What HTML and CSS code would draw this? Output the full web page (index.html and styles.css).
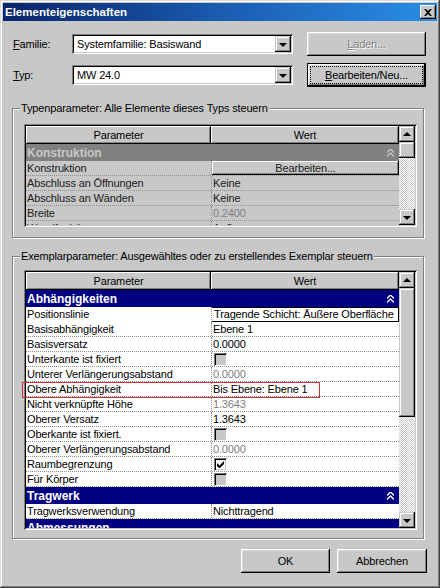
FILE: index.html
```html
<!DOCTYPE html>
<html lang="de">
<head>
<meta charset="utf-8">
<title>Elementeigenschaften</title>
<link rel="stylesheet" href="styles.css">
</head>
<body>
<div class="window">
  <div class="titlebar">
    <span class="title">Elementeigenschaften</span>
    <span class="closebtn"><svg width="8" height="7" viewBox="0 0 8 7"><path d="M0 0h2l2 2 2-2h2L5 3.5 8 7H6L4 5 2 7H0l3-3.5z" fill="#000"/></svg></span>
  </div>
  <div class="content">
    <div class="formrow">
      <span class="lbl"><u>F</u>amilie:</span>
      <div class="combo"><span class="combo-text">Systemfamilie: Basiswand</span><span class="dropbtn"><span class="tri-down"></span></span></div>
      <span class="btn side disabled"><span><u>L</u>aden...</span></span>
    </div>
    <div class="formrow">
      <span class="lbl"><u>T</u>yp:</span>
      <div class="combo"><span class="combo-text">MW 24.0</span><span class="dropbtn"><span class="tri-down"></span></span></div>
      <span class="btn side default"><span class="focus"><u>B</u>earbeiten/Neu...</span></span>
    </div>

    <div class="group g1">
      <div class="glabel">Typenparameter: Alle Elemente dieses Typs steuern</div>
      <div class="grid t1">
        <div class="view">
          <div class="hdr"><span>Parameter</span><span>Wert</span></div>
          <div class="cat gray"><span>Konstruktion</span><span class="chev"><svg width="7" height="8" viewBox="0 0 7 8"><path d="M0 3.5L3.5 0 7 3.5M0 7.5L3.5 4 7 7.5" fill="none" stroke="currentColor" stroke-width="1.3"/></svg></span></div>
          <div class="row ro"><span class="p">Konstruktion</span><span class="v"><span class="cellbtn">Bearbeiten...</span></span></div>
          <div class="row ro"><span class="p">Abschluss an Öffnungen</span><span class="v">Keine</span></div>
          <div class="row ro"><span class="p">Abschluss an Wänden</span><span class="v">Keine</span></div>
          <div class="row ro"><span class="p">Breite</span><span class="v dim">0.2400</span></div>
          <div class="row ro"><span class="p">Wandfunktion</span><span class="v">Außen</span></div>
        </div>
        <div class="sbar">
          <span class="sbtn"><span class="tri-up"></span></span>
          <span class="thumb th1"></span>
          <span class="track"></span>
          <span class="sbtn"><span class="tri-down"></span></span>
        </div>
      </div>
    </div>

    <div class="group g2">
      <div class="glabel">Exemplarparameter: Ausgewähltes oder zu erstellendes Exemplar steuern</div>
      <div class="grid t2">
        <div class="view">
          <div class="hdr"><span>Parameter</span><span>Wert</span></div>
          <div class="cat navy"><span>Abhängigkeiten</span><span class="chev"><svg width="7" height="8" viewBox="0 0 7 8"><path d="M0 3.5L3.5 0 7 3.5M0 7.5L3.5 4 7 7.5" fill="none" stroke="currentColor" stroke-width="1.3"/></svg></span></div>
          <div class="row"><span class="p">Positionslinie</span><span class="v"><span class="edit">Tragende Schicht: Äußere Oberfläche</span></span></div>
          <div class="row"><span class="p">Basisabhängigkeit</span><span class="v">Ebene 1</span></div>
          <div class="row"><span class="p">Basisversatz</span><span class="v">0.0000</span></div>
          <div class="row"><span class="p">Unterkante ist fixiert</span><span class="v"><span class="chk off"></span></span></div>
          <div class="row"><span class="p">Unterer Verlängerungsabstand</span><span class="v dim">0.0000</span></div>
          <div class="row"><span class="p">Obere Abhängigkeit</span><span class="v">Bis Ebene: Ebene 1</span></div>
          <div class="row"><span class="p">Nicht verknüpfte Höhe</span><span class="v dim">1.3643</span></div>
          <div class="row"><span class="p">Oberer Versatz</span><span class="v">1.3643</span></div>
          <div class="row"><span class="p">Oberkante ist fixiert.</span><span class="v"><span class="chk off"></span></span></div>
          <div class="row"><span class="p">Oberer Verlängerungsabstand</span><span class="v dim">0.0000</span></div>
          <div class="row"><span class="p">Raumbegrenzung</span><span class="v"><span class="chk on"><svg width="7" height="7" viewBox="0 0 7 7"><path d="M0 2v3l2 2h1l4-4V0L2.5 4.5z" fill="#000"/></svg></span></span></div>
          <div class="row"><span class="p">Für Körper</span><span class="v"><span class="chk off"></span></span></div>
          <div class="cat navy"><span>Tragwerk</span><span class="chev"><svg width="7" height="8" viewBox="0 0 7 8"><path d="M0 3.5L3.5 0 7 3.5M0 7.5L3.5 4 7 7.5" fill="none" stroke="currentColor" stroke-width="1.3"/></svg></span></div>
          <div class="row"><span class="p">Tragwerksverwendung</span><span class="v">Nichttragend</span></div>
          <div class="cat navy"><span>Abmessungen</span><span class="chev"></span></div>
        </div>
        <div class="sbar">
          <span class="sbtn"><span class="tri-up"></span></span>
          <span class="thumb th2"></span>
          <span class="track"></span>
          <span class="sbtn"><span class="tri-down"></span></span>
        </div>
        <div class="mark"></div>
      </div>
    </div>

    <div class="footer">
      <span class="btn foot"><span>OK</span></span>
      <span class="btn foot"><span>Abbrechen</span></span>
    </div>
  </div>
</div>
</body>
</html>
```

FILE: styles.css
```css
* { box-sizing: border-box; }
html, body { margin: 0; padding: 0; background: #c8c8c8; }
body {
  font-family: "Liberation Sans", Arial, sans-serif;
  font-size: 11px;
  color: #000;
  letter-spacing: -0.15px;
}
.window {
  width: 440px;
  height: 588px;
  padding: 3px;
  background: #c8c8c8;
  box-shadow: inset -1px -1px #404040, inset 1px 1px #dcdcdc, inset -2px -2px #808080, inset 2px 2px #fff;
  display: flex;
  flex-direction: column;
}
.titlebar {
  height: 18px;
  flex: none;
  background: linear-gradient(90deg, #0a246a 0%, #1a5cb0 50%, #2a8ee6 100%);
  display: flex;
  align-items: center;
  justify-content: space-between;
  padding: 0 1px 0 2px;
}
.title { color: #fff; font-weight: bold; font-size: 11.5px; letter-spacing: 0; }
.closebtn {
  width: 16px; height: 14px;
  background: #c8c8c8;
  box-shadow: inset -1px -1px #000, inset 1px 1px #fff, inset -2px -2px #808080;
  display: flex; align-items: center; justify-content: center;
}
.content { flex: 1; display: flex; flex-direction: column; padding-top: 11px; }

.formrow { display: flex; align-items: center; height: 24px; padding-left: 10px; }
.formrow + .formrow { margin-top: 7px; }
.lbl { width: 59px; }
.combo {
  width: 221px; height: 20px;
  background: #fff;
  box-shadow: inset 1px 1px #808080, inset -1px -1px #fff, inset 2px 2px #000, inset -2px -2px #c8c8c8;
  display: flex; align-items: center; justify-content: space-between;
  padding: 2px;
}
.combo-text { padding-left: 3px; }
.dropbtn {
  width: 16px; height: 16px;
  background: #c8c8c8;
  box-shadow: inset -1px -1px #000, inset 1px 1px #c8c8c8, inset -2px -2px #808080, inset 2px 2px #fff;
  display: flex; align-items: center; justify-content: center;
}
.tri-down { width: 0; height: 0; border-left: 4px solid transparent; border-right: 4px solid transparent; border-top: 4px solid #000; margin-top: 1px; }
.tri-up { width: 0; height: 0; border-left: 4px solid transparent; border-right: 4px solid transparent; border-bottom: 4px solid #000; margin-top: -1px; }

.btn {
  display: flex; align-items: center; justify-content: center;
  background: #c8c8c8;
  box-shadow: inset -1px -1px #000, inset 1px 1px #fff, inset -2px -2px #808080, inset 2px 2px #dcdcdc;
}
.btn.side { width: 119px; height: 24px; margin-left: 14px; }
.btn.disabled { color: #808080; text-shadow: 1px 1px 0 #fff; }
.btn.default {
  box-shadow: inset 0 0 0 1px #000, inset -2px -2px #000, inset 2px 2px #fff, inset -3px -3px #808080, inset 3px 3px #dcdcdc;
  padding: 4px;
}
.focus {
  flex: 1; align-self: stretch;
  outline: 1px dotted #000; outline-offset: 0;
  display: flex; align-items: center; justify-content: center;
}

.group {
  margin-left: 9px;
  width: 412px;
  border: 1px solid #808080;
  box-shadow: inset 1px 1px #fff, 1px 1px #fff;
  padding: 0 6px 10px 11px;
}
.g1 { margin-top: 21px; }
.g2 { margin-top: 18px; padding-bottom: 8px; }
.glabel {
  margin: -7px 0 0 -4px;
  padding: 0 1px;
  width: fit-content;
  line-height: 13px;
  background: #c8c8c8;
}
.grid {
  width: 393px;
  padding: 2px;
  display: flex;
  position: relative;
  box-shadow: inset 1px 1px #808080, inset -1px -1px #fff, inset 2px 2px #000, inset -2px -2px #c8c8c8;
}
.t1 { height: 103px; margin-top: 9px; background: #c8c8c8; }
.t2 { height: 260px; margin-top: 7px; background: #fff; }
.view { width: 373px; overflow: hidden; }
.hdr { display: grid; grid-template-columns: 185px 188px; height: 18px; }
.hdr span {
  background: #c8c8c8;
  box-shadow: inset -1px -1px #000, inset 1px 1px #fff, inset -2px -2px #808080;
  display: flex; align-items: center; justify-content: center;
}
.cat {
  height: 17px;
  display: flex; align-items: center; justify-content: space-between;
  padding: 0 5px 0 1px;
  font-weight: bold; font-size: 12px; letter-spacing: 0;
}
.cat.gray { background: #808080; color: #c8c8c8; }
.cat.navy { background: #000080; color: #fff; }
.chev { display: flex; width: 7px; }
.row {
  display: grid; grid-template-columns: 185px 188px;
  height: 15px;
  border-bottom: 1px dotted #909090;
  line-height: 14px;
}
.row.ro { color: #202020; }
.p { padding-left: 1px; white-space: nowrap; overflow: hidden; }
.v {
  border-left: 1px dotted #909090;
  padding-left: 1px;
  white-space: nowrap; overflow: hidden;
  display: flex; align-items: center;
}
.dim { color: #808080; }
.cellbtn {
  margin-left: -1px;
  width: 188px; height: 14px;
  background: #c8c8c8;
  box-shadow: inset -1px -1px #000, inset 1px 1px #fff, inset -2px -2px #808080;
  display: flex; align-items: center; justify-content: center;
}
.edit {
  margin-left: -2px;
  width: 188px; height: 15px;
  border: 1px solid #000;
  background: #fff;
  padding-left: 2px;
  line-height: 13px;
  overflow: hidden; white-space: nowrap;
}
.row:has(.edit) { border-bottom: none; }
.chk {
  width: 13px; height: 13px;
  margin-left: 1px;
  box-shadow: inset 1px 1px #808080, inset -1px -1px #fff, inset 2px 2px #000, inset -2px -2px #c8c8c8;
  display: flex; align-items: center; justify-content: center;
}
.chk.off { background: #c8c8c8; }
.chk.on { background: #fff; }

.sbar { width: 16px; display: flex; flex-direction: column; }
.sbtn {
  height: 16px; flex: none;
  background: #c8c8c8;
  box-shadow: inset -1px -1px #000, inset 1px 1px #c8c8c8, inset -2px -2px #808080, inset 2px 2px #fff;
  display: flex; align-items: center; justify-content: center;
}
.thumb {
  flex: none;
  background: #c8c8c8;
  box-shadow: inset -1px -1px #000, inset 1px 1px #c8c8c8, inset -2px -2px #808080, inset 2px 2px #fff;
}
.th1 { height: 16px; }
.th2 { height: 129px; }
.track { flex: 1; background: repeating-conic-gradient(#c8c8c8 0% 25%, #fff 0% 50%) 0 0 / 2px 2px; }
.mark {
  position: absolute;
  left: -2px; top: 112px;
  width: 298px; height: 16px;
  border: 1px solid #cc3333;
}

.footer { display: flex; justify-content: flex-end; gap: 7px; margin-top: 10px; padding-right: 10px; }
.btn.foot { width: 89px; height: 24px; }
.btn.foot + .btn.foot { width: 90px; }
```
